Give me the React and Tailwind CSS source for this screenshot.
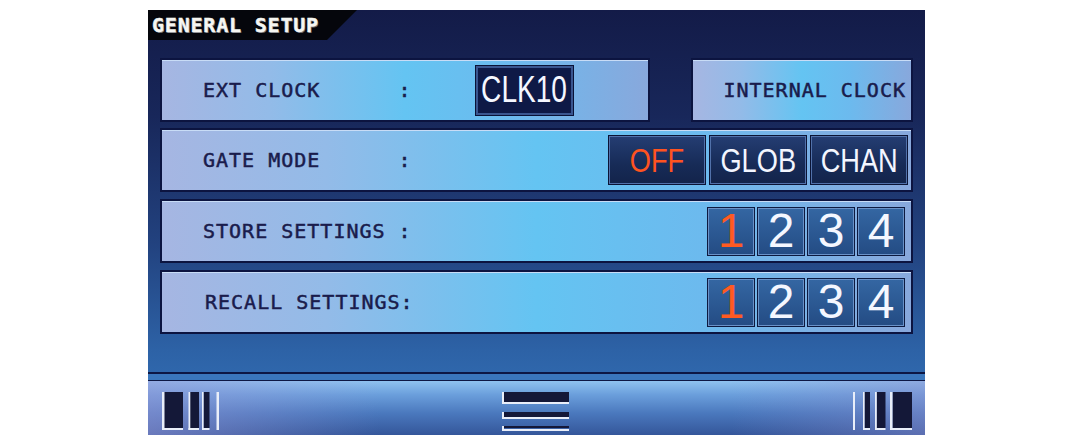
import React from 'react';

const mono = "font-['DejaVu_Sans_Mono','Liberation_Mono',monospace]";
const sans = "font-['Liberation_Sans',Arial,sans-serif]";

const panel =
  'border-2 border-[#0c1440] bg-[linear-gradient(90deg,#a6b6e2_0%,#93bbe8_22%,#64c4f2_50%,#6cbaee_72%,#88a8dc_100%)] shadow-[inset_0_1px_0_#c8dcf6]';

function Label({ children }) {
  return (
    <span className={`${mono} text-[20px] leading-none tracking-[1px] text-[#1a1c4c] whitespace-pre [-webkit-text-stroke:0.5px_#1a1c4c]`}>
      {children}
    </span>
  );
}

function GateButton({ label, active }) {
  return (
    <div className="w-[96px] h-[48px] flex items-center justify-center border border-[#5171aa] shadow-[0_0_0_1px_#0b1435] bg-[linear-gradient(180deg,#243d72_0%,#172b57_60%,#13244b_100%)]">
      <span
        className={`${sans} inline-block scale-x-80 text-[34px] leading-none ${active ? 'text-[#ff5320]' : 'text-[#f3f6ff]'}`}
      >
        {label}
      </span>
    </div>
  );
}

function NumButton({ n, active }) {
  return (
    <div className="w-[46px] h-[47px] flex items-center justify-center border border-[#6a92c8] shadow-[0_0_0_1px_#0d1a40] bg-[linear-gradient(180deg,#3466a2_0%,#2b5892_55%,#244c84_100%)]">
      <span className={`${sans} text-[48px] leading-none ${active ? 'text-[#ff5a22]' : 'text-[#f4f7ff]'}`}>
        {n}
      </span>
    </div>
  );
}

function Numbers() {
  return (
    <div className="ml-auto flex gap-[4px] pr-[7px]">
      {[1, 2, 3, 4].map(n => (
        <NumButton key={n} n={n} active={n === 1} />
      ))}
    </div>
  );
}

function LeftBars() {
  // decreasing "L" bars
  return (
    <svg width="58" height="38" viewBox="0 0 58 38">
      <rect x="2" y="0" width="19" height="36" fill="#141838" />
      <rect x="0" y="0" width="2.5" height="38" fill="#e9eef9" />
      <rect x="0" y="36" width="21" height="2" fill="#e9eef9" />
      <rect x="28" y="0" width="9" height="36" fill="#141838" />
      <rect x="26.5" y="0" width="1.8" height="38" fill="#e9eef9" />
      <rect x="26.5" y="36" width="10.5" height="2" fill="#e9eef9" />
      <rect x="41.5" y="0" width="6" height="36" fill="#141838" />
      <rect x="40" y="0" width="1.6" height="38" fill="#e9eef9" />
      <rect x="40" y="36" width="7.5" height="2" fill="#e9eef9" />
      <rect x="54.5" y="0" width="2.5" height="38" fill="#e9eef9" />
    </svg>
  );
}

function RightBars() {
  // increasing "L" bars
  return (
    <svg width="59" height="38" viewBox="0 0 59 38">
      <rect x="0" y="0" width="2" height="38" fill="#e9eef9" />
      <rect x="11.5" y="0" width="5.5" height="36" fill="#141838" />
      <rect x="10" y="0" width="1.6" height="38" fill="#e9eef9" />
      <rect x="10" y="36" width="7" height="2" fill="#e9eef9" />
      <rect x="23.5" y="0" width="9" height="36" fill="#141838" />
      <rect x="22" y="0" width="1.8" height="38" fill="#e9eef9" />
      <rect x="22" y="36" width="10.5" height="2" fill="#e9eef9" />
      <rect x="39.5" y="0" width="19.5" height="36" fill="#141838" />
      <rect x="37" y="0" width="2.5" height="38" fill="#e9eef9" />
      <rect x="37" y="36" width="22" height="2" fill="#e9eef9" />
    </svg>
  );
}

function MenuIcon() {
  return (
    <svg width="67" height="39" viewBox="0 0 67 39">
      <rect x="2" y="0" width="65" height="10" fill="#141838" />
      <rect x="0" y="0" width="2" height="12" fill="#e9eef9" />
      <rect x="0" y="10" width="67" height="2" fill="#e9eef9" />
      <rect x="2" y="20" width="65" height="5" fill="#141838" />
      <rect x="0" y="20" width="2" height="7" fill="#e9eef9" />
      <rect x="0" y="25" width="67" height="2" fill="#e9eef9" />
      <rect x="2" y="34" width="65" height="2" fill="#141838" />
      <rect x="0" y="34" width="2" height="5" fill="#e9eef9" />
      <rect x="0" y="37" width="67" height="2" fill="#e9eef9" />
    </svg>
  );
}

export default function App() {
  return (
    <div className="w-[1075px] h-[435px] bg-white overflow-hidden">
      <div className="ml-[148px] mt-[10px] w-[777px] h-[425px] flex flex-col bg-[linear-gradient(180deg,#131b48_0%,#18275a_25%,#22427f_55%,#2d62a6_80%,#3474bb_100%)]">
        {/* Title tab */}
        <div className="h-[30px] flex shrink-0">
          <div className="w-[209px] h-full bg-[#05060c] [clip-path:polygon(0_0,100%_0,calc(100%-30px)_100%,0_100%)] pl-[4px] flex items-center">
            <span className={`${mono} font-bold text-[20px] leading-none tracking-[0.8px] text-[#f6f6f2] [text-shadow:1px_1px_0_#6a6a70] [-webkit-text-stroke:0.4px_#f6f6f2]`}>
              GENERAL SETUP
            </span>
          </div>
        </div>

        {/* Rows */}
        <div className="px-[12px] pt-[18px] flex flex-col shrink-0">
          <div className="h-[64px] flex gap-[41px]">
            <div className={`${panel} w-[490px] h-full flex items-center pl-[41px]`}>
              <Label>{'EXT CLOCK      :'}</Label>
              <div className="ml-[64px] w-[97px] h-[49px] flex items-center justify-center border-2 border-[#3a568f] shadow-[0_0_0_1px_#0a1236] bg-[#0e1946]">
                <span className={`${sans} inline-block scale-x-78 text-[36px] leading-none text-[#f5f7ff]`}>CLK10</span>
              </div>
            </div>
            <div className={`${panel} flex-1 h-full flex items-center justify-end pr-[5px]`}>
              <Label>INTERNAL CLOCK</Label>
            </div>
          </div>

          <div className={`${panel} mt-[6px] h-[64px] flex items-center pl-[41px]`}>
            <Label>{'GATE MODE      :'}</Label>
            <div className="ml-auto flex gap-[5px] pr-[4px]">
              <GateButton label="OFF" active />
              <GateButton label="GLOB" />
              <GateButton label="CHAN" />
            </div>
          </div>

          <div className={`${panel} mt-[7px] h-[64px] flex items-center pl-[41px]`}>
            <Label>{'STORE SETTINGS :'}</Label>
            <Numbers />
          </div>

          <div className={`${panel} mt-[7px] h-[64px] flex items-center pl-[43px]`}>
            <Label>{'RECALL SETTINGS:'}</Label>
            <Numbers />
          </div>
        </div>

        <div className="flex-1" />

        {/* Bottom bar */}
        <div className="h-[2px] bg-[#0d1744] shrink-0" />
        <div className="h-[6px] bg-[#3a76bc] shrink-0" />
        <div className="h-[1px] bg-[#0d1744] shrink-0" />
        <div className="h-[54px] shrink-0 flex items-start pt-[11px] bg-[linear-gradient(90deg,rgba(150,150,215,0.55)_0%,rgba(150,150,215,0)_30%,rgba(120,150,215,0)_75%,rgba(140,140,205,0.45)_100%),linear-gradient(180deg,#8fc2f0_0%,#6b9fdc_25%,#4a78bd_60%,#34569a_100%)]">
          <div className="ml-[14px]">
            <LeftBars />
          </div>
          <div className="ml-[282px]">
            <MenuIcon />
          </div>
          <div className="ml-auto mr-[13px]">
            <RightBars />
          </div>
        </div>
      </div>
    </div>
  );
}
